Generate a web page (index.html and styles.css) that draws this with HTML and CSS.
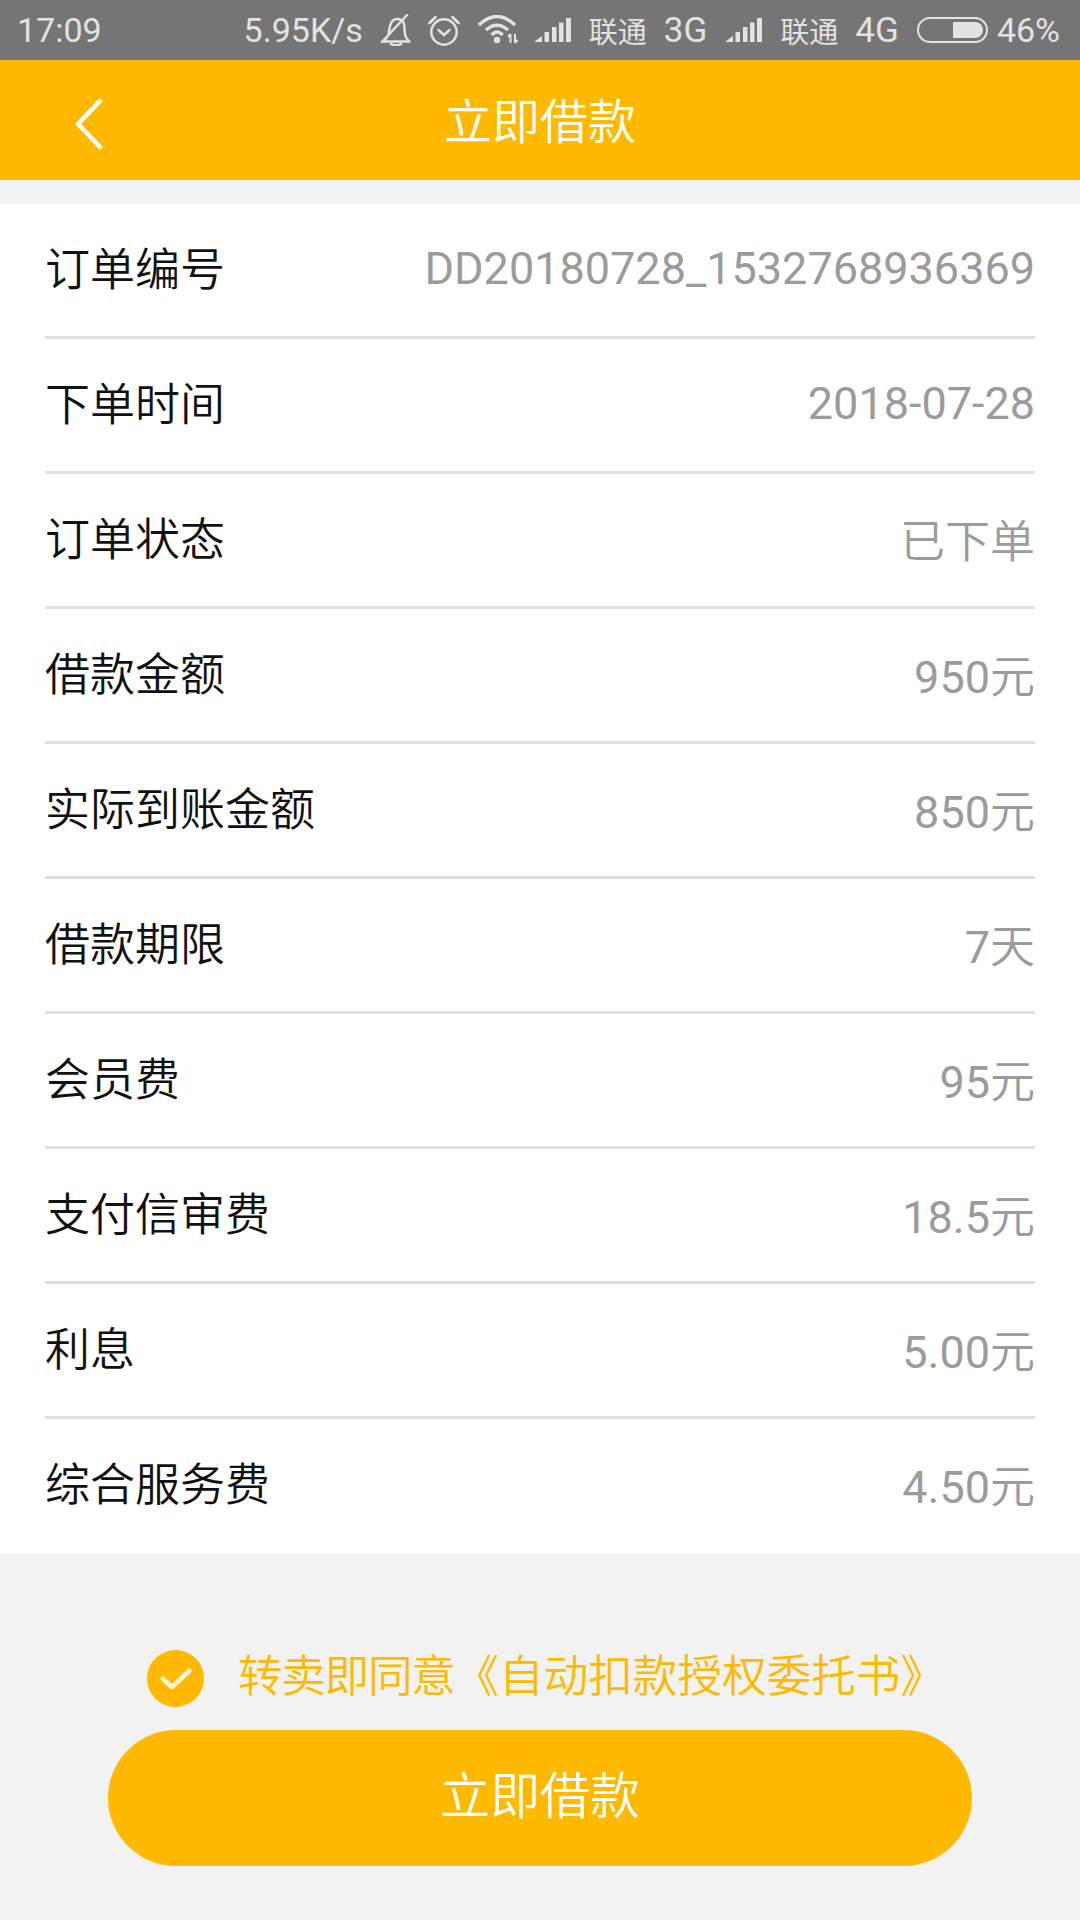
FILE: index.html
```html
<!DOCTYPE html>
<html lang="zh">
<head>
<meta charset="utf-8">
<title>立即借款</title>
<link rel="stylesheet" href="styles.css">
</head>
<body>
<div class="status">
  <span class="time">17:09</span>
  <div class="status-right">
    <span class="speed">5.95K/s</span>
    <svg class="ic bell" viewBox="0 0 32 32" width="32" height="32"><path d="M2 27.500C5 26 7.500 24 8.500 20L10 12C11 7.500 14 5 17 5c3 0 6 1 7 5l1 10c.3 3 2 5.500 4.500 7.500ZM27 1 2 28M11 30c2 1.500 8 1.500 10 0" fill="none" stroke="#e2e2e2" stroke-width="2.500" stroke-linecap="round" stroke-linejoin="round"/></svg>
    <svg class="ic alarm" viewBox="0 0 32 32" width="32" height="32"><circle cx="16" cy="18" r="12.700" fill="none" stroke="#e2e2e2" stroke-width="2.500"/><path d="M10.500 16l5.500 5 5.500-5M1.500 9l6-6M30.500 9l-6-6" fill="none" stroke="#e2e2e2" stroke-width="2.500" stroke-linecap="round"/></svg>
    <svg class="ic wifi" viewBox="0 0 40 30" width="40" height="30"><path d="M1 10Q19-7 37 10M8 15Q19 5.600 30 15M13.700 20Q19 14 24.700 20" fill="none" stroke="#e2e2e2" stroke-width="3.400"/><circle cx="19" cy="25" r="3.200" fill="#e2e2e2"/><path d="M32.500 19v9M37 19v9M30 22l2.500-3M39.500 25l-2.500 3" fill="none" stroke="#e2e2e2" stroke-width="2"/></svg>
    <svg class="ic sig" viewBox="0 0 37 26" width="37" height="26"><path d="M0 25l8-6v6zM10.500 25h4.500V15h-4.500zM18 25h4.500V10H18zM25 25h4.500V5.500H25zM32 25h5V1h-5z" fill="#e2e2e2"/></svg>
    <span class="cjk">联通</span>
    <span class="net">3G</span>
    <svg class="ic sig" viewBox="0 0 37 26" width="37" height="26"><path d="M0 25l8-6v6zM10.500 25h4.500V15h-4.500zM18 25h4.500V10H18zM25 25h4.500V5.500H25zM32 25h5V1h-5z" fill="#e2e2e2"/></svg>
    <span class="cjk">联通</span>
    <span class="net">4G</span>
    <span class="battery"><span class="battery-fill"></span></span>
    <span class="pct">46%</span>
  </div>
</div>
<header class="nav">
  <svg class="back" viewBox="0 0 30 50" width="30" height="50"><path d="M25 2 3 25l22 23" fill="none" stroke="#fff" stroke-width="4.500" stroke-linecap="round" stroke-linejoin="round"/></svg>
  <h1 class="title">立即借款</h1>
</header>
<main class="card">
  <div class="row"><span class="label">订单编号</span><span class="value">DD20180728_1532768936369</span></div>
  <div class="row"><span class="label">下单时间</span><span class="value">2018-07-28</span></div>
  <div class="row"><span class="label">订单状态</span><span class="value unit">已下单</span></div>
  <div class="row"><span class="label">借款金额</span><span class="value">950<span class="unit">元</span></span></div>
  <div class="row"><span class="label">实际到账金额</span><span class="value">850<span class="unit">元</span></span></div>
  <div class="row"><span class="label">借款期限</span><span class="value">7<span class="unit">天</span></span></div>
  <div class="row"><span class="label">会员费</span><span class="value">95<span class="unit">元</span></span></div>
  <div class="row"><span class="label">支付信审费</span><span class="value">18.5<span class="unit">元</span></span></div>
  <div class="row"><span class="label">利息</span><span class="value">5.00<span class="unit">元</span></span></div>
  <div class="row"><span class="label">综合服务费</span><span class="value">4.50<span class="unit">元</span></span></div>
</main>
<div class="agree">
  <svg class="check" viewBox="0 0 57 57" width="57" height="57"><circle cx="28.500" cy="28.500" r="28.500" fill="#ffba00"/><path d="M16 29l9 8 17-16" fill="none" stroke="#fdf3d6" stroke-width="5" stroke-linecap="round" stroke-linejoin="round"/></svg>
  <span class="agree-text"><span class="agree-lead">转卖即同意</span>《自动扣款授权委托书》</span>
</div>
<button class="submit">立即借款</button>
</body>
</html>
```
FILE: styles.css
```css
* { box-sizing: border-box; }
html, body { margin: 0; padding: 0; }
body {
  width: 1080px;
  height: 1920px;
  overflow: hidden;
  background: #f2f2f2;
  font-family: Roboto, "Noto Sans CJK SC", sans-serif;
}
.status {
  height: 60px;
  background: #757575;
  color: #e2e2e2;
  display: flex;
  align-items: center;
  justify-content: space-between;
  padding: 0 20px 0 17px;
  font-size: 34px;
}
.status-right { display: flex; align-items: center; }
.speed { margin-right: 17px; }
.ic { display: block; }
.bell { margin-right: 16px; }
.alarm { margin-right: 18px; }
.wifi { margin-right: 16px; }
.sig { margin-right: 18px; }
.cjk { font-size: 29px; margin-right: 17px; }
.net { margin-right: 18px; font-size: 35px; }
.battery {
  width: 71px;
  height: 26px;
  border: 2px solid #e2e2e2;
  border-radius: 13px;
  margin-right: 9px;
  padding: 3px;
  display: flex;
  justify-content: flex-end;
}
.battery-fill {
  width: 30px;
  background: #e2e2e2;
  border-radius: 0 9px 9px 0;
}
.nav {
  height: 120px;
  background: #ffba00;
  display: flex;
  align-items: center;
  justify-content: center;
  padding-bottom: 4px;
  position: relative;
}
.back { position: absolute; left: 75px; top: 39px; }
.title {
  margin: 0;
  font-size: 48px;
  font-weight: 350;
  color: #fff;
}
.card {
  margin-top: 24px;
  background: #fff;
  padding: 0 45px;
}
.row {
  height: 135px;
  display: flex;
  align-items: center;
  justify-content: space-between;
  border-bottom: 3px solid #e0e0e0;
  padding-bottom: 8px;
  font-size: 45px;
}
.row:last-child { border-bottom: 0; padding-bottom: 11px; }
.label { color: #111; font-weight: 350; }
.value { color: #9b9b9b; font-size: 45px; margin-top: 4px; }
.unit { font-weight: 350; }
.agree {
  margin-top: 96px;
  display: flex;
  align-items: center;
  padding-left: 147px;
  height: 57px;
}
.check { margin-right: 34px; }
.agree-text { color: #ffba00; font-size: 44.6px; font-weight: 350; white-space: nowrap; padding-bottom: 13px; }
.agree-lead { letter-spacing: -1.300px; }
.submit {
  display: block;
  margin: 23px 0 0 108px;
  width: 864px;
  height: 136px;
  border: 0;
  border-radius: 68px;
  background: #ffba00;
  color: #fff;
  font-family: inherit;
  font-size: 50px;
  font-weight: 350;
  padding-bottom: 14px;
}
```
